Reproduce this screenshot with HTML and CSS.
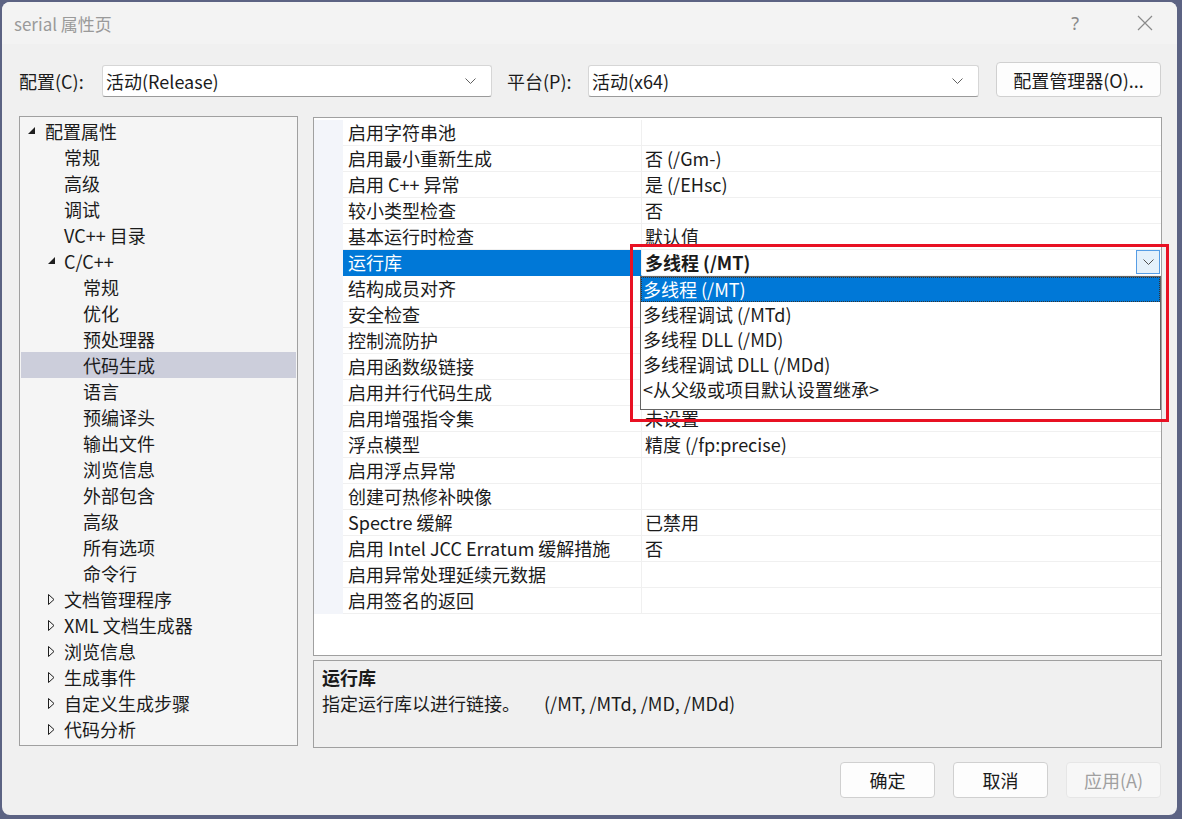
FILE: index.html
```html
<!DOCTYPE html>
<html lang="zh-CN">
<head>
<meta charset="utf-8">
<title>serial 属性页</title>
<link rel="stylesheet" href="styles.css">
</head>
<body>
<div class="window">
  <div class="titlebar">
    <span class="title">serial 属性页</span>
    <div class="tb-actions">
      <span class="help">?</span>
      <svg class="close" width="16" height="16" viewBox="0 0 16 16"><path d="M1 1 L15 15 M15 1 L1 15" stroke="#8a8a8a" stroke-width="1.2" fill="none"/></svg>
    </div>
  </div>
  <div class="content">
    <div class="config-row">
      <span class="lbl lbl-config">配置(C):</span>
      <div class="combo combo-config"><span>活动(Release)</span><svg class="chev" width="11" height="6" viewBox="0 0 11 6"><path d="M0.5 0.5 L5.5 5.5 L10.5 0.5" stroke="#606060" fill="none"/></svg></div>
      <span class="lbl lbl-platform">平台(P):</span>
      <div class="combo combo-platform"><span>活动(x64)</span><svg class="chev" width="11" height="6" viewBox="0 0 11 6"><path d="M0.5 0.5 L5.5 5.5 L10.5 0.5" stroke="#606060" fill="none"/></svg></div>
      <button class="btn btn-manager">配置管理器(O)...</button>
    </div>
    <div class="main">
      <div class="tree">
        <div class="node l0"><span class="arrow"><svg width="8" height="8" viewBox="0 0 8 8"><path d="M7 0 L7 7 L0 7 Z" fill="#1e1e1e"/></svg></span>配置属性</div>
        <div class="node l1"><span class="arrow"></span>常规</div>
        <div class="node l1"><span class="arrow"></span>高级</div>
        <div class="node l1"><span class="arrow"></span>调试</div>
        <div class="node l1"><span class="arrow"></span>VC++ 目录</div>
        <div class="node l1"><span class="arrow"><svg width="8" height="8" viewBox="0 0 8 8"><path d="M7 0 L7 7 L0 7 Z" fill="#1e1e1e"/></svg></span>C/C++</div>
        <div class="node l2"><span class="arrow"></span>常规</div>
        <div class="node l2"><span class="arrow"></span>优化</div>
        <div class="node l2"><span class="arrow"></span>预处理器</div>
        <div class="node l2 selected"><span class="arrow"></span>代码生成</div>
        <div class="node l2"><span class="arrow"></span>语言</div>
        <div class="node l2"><span class="arrow"></span>预编译头</div>
        <div class="node l2"><span class="arrow"></span>输出文件</div>
        <div class="node l2"><span class="arrow"></span>浏览信息</div>
        <div class="node l2"><span class="arrow"></span>外部包含</div>
        <div class="node l2"><span class="arrow"></span>高级</div>
        <div class="node l2"><span class="arrow"></span>所有选项</div>
        <div class="node l2"><span class="arrow"></span>命令行</div>
        <div class="node l1"><span class="arrow"><svg width="7" height="11" viewBox="0 0 7 11"><path d="M0.5 0.5 L6 5.5 L0.5 10.5 Z" fill="none" stroke="#1e1e1e"/></svg></span>文档管理程序</div>
        <div class="node l1"><span class="arrow"><svg width="7" height="11" viewBox="0 0 7 11"><path d="M0.5 0.5 L6 5.5 L0.5 10.5 Z" fill="none" stroke="#1e1e1e"/></svg></span>XML 文档生成器</div>
        <div class="node l1"><span class="arrow"><svg width="7" height="11" viewBox="0 0 7 11"><path d="M0.5 0.5 L6 5.5 L0.5 10.5 Z" fill="none" stroke="#1e1e1e"/></svg></span>浏览信息</div>
        <div class="node l1"><span class="arrow"><svg width="7" height="11" viewBox="0 0 7 11"><path d="M0.5 0.5 L6 5.5 L0.5 10.5 Z" fill="none" stroke="#1e1e1e"/></svg></span>生成事件</div>
        <div class="node l1"><span class="arrow"><svg width="7" height="11" viewBox="0 0 7 11"><path d="M0.5 0.5 L6 5.5 L0.5 10.5 Z" fill="none" stroke="#1e1e1e"/></svg></span>自定义生成步骤</div>
        <div class="node l1"><span class="arrow"><svg width="7" height="11" viewBox="0 0 7 11"><path d="M0.5 0.5 L6 5.5 L0.5 10.5 Z" fill="none" stroke="#1e1e1e"/></svg></span>代码分析</div>
      </div>
      <div class="right">
        <div class="grid">
          <div class="row"><span class="gut"></span><span class="name">启用字符串池</span><span class="val"></span></div>
          <div class="row"><span class="gut"></span><span class="name">启用最小重新生成</span><span class="val">否 (/Gm-)</span></div>
          <div class="row"><span class="gut"></span><span class="name">启用 C++ 异常</span><span class="val">是 (/EHsc)</span></div>
          <div class="row"><span class="gut"></span><span class="name">较小类型检查</span><span class="val">否</span></div>
          <div class="row"><span class="gut"></span><span class="name">基本运行时检查</span><span class="val">默认值</span></div>
          <div class="row sel"><span class="gut"></span><span class="name">运行库</span><span class="val edit"><b>多线程 (/MT)</b><span class="ddbtn"><svg width="11" height="6" viewBox="0 0 11 6"><path d="M0.5 0.5 L5.5 5.5 L10.5 0.5" stroke="#505050" fill="none"/></svg></span></span></div>
          <div class="row"><span class="gut"></span><span class="name">结构成员对齐</span><span class="val"></span></div>
          <div class="row"><span class="gut"></span><span class="name">安全检查</span><span class="val"></span></div>
          <div class="row"><span class="gut"></span><span class="name">控制流防护</span><span class="val"></span></div>
          <div class="row"><span class="gut"></span><span class="name">启用函数级链接</span><span class="val"></span></div>
          <div class="row"><span class="gut"></span><span class="name">启用并行代码生成</span><span class="val"></span></div>
          <div class="row"><span class="gut"></span><span class="name">启用增强指令集</span><span class="val">未设置</span></div>
          <div class="row"><span class="gut"></span><span class="name">浮点模型</span><span class="val">精度 (/fp:precise)</span></div>
          <div class="row"><span class="gut"></span><span class="name">启用浮点异常</span><span class="val"></span></div>
          <div class="row"><span class="gut"></span><span class="name">创建可热修补映像</span><span class="val"></span></div>
          <div class="row"><span class="gut"></span><span class="name">Spectre 缓解</span><span class="val">已禁用</span></div>
          <div class="row"><span class="gut"></span><span class="name">启用 Intel JCC Erratum 缓解措施</span><span class="val">否</span></div>
          <div class="row"><span class="gut"></span><span class="name">启用异常处理延续元数据</span><span class="val"></span></div>
          <div class="row"><span class="gut"></span><span class="name">启用签名的返回</span><span class="val"></span></div>

          <div class="droplist">
            <div class="opt active">多线程 (/MT)</div>
            <div class="opt">多线程调试 (/MTd)</div>
            <div class="opt">多线程 DLL (/MD)</div>
            <div class="opt">多线程调试 DLL (/MDd)</div>
            <div class="opt">&lt;从父级或项目默认设置继承&gt;</div>
          </div>
          <div class="redbox"></div>
        </div>
        <div class="desc">
          <div class="desc-title">运行库</div>
          <div class="desc-text">指定运行库以进行链接。<span class="flags">(/MT, /MTd, /MD, /MDd)</span></div>
        </div>
      </div>
    </div>
    <div class="footer">
      <button class="btn btn-foot">确定</button>
      <button class="btn btn-foot">取消</button>
      <button class="btn btn-foot disabled">应用(A)</button>
    </div>
  </div>
</div>
</body>
</html>
```
FILE: styles.css
```css
* { box-sizing: border-box; }
html, body { margin: 0; padding: 0; }
body {
  width: 1182px;
  height: 819px;
  overflow: hidden;
  background: #5c6383;
  font-family: "Noto Sans CJK SC", "Microsoft YaHei", sans-serif;
  font-size: 18px;
  color: #1b1b1b;
}
.window {
  margin: 2px 0 0 2px;
  width: 1175px;
  height: 813px;
  border-radius: 8px;
  background: #f0f0f0;
  overflow: hidden;
  display: flex;
  flex-direction: column;
}
.titlebar {
  height: 42px;
  flex: none;
  background: #f3f3f3;
  display: flex;
  align-items: center;
  justify-content: space-between;
  padding: 0 24px 0 12px;
}
.title {
  font-size: 17px;
  color: #9a9a9a;
}
.tb-actions {
  display: flex;
  align-items: center;
  gap: 58px;
}
.help {
  font-family: "Noto Sans", sans-serif;
  font-size: 18px;
  color: #8a8a8a;
}
.close { display: block; }

.content {
  flex: 1;
  padding: 0 15px 0 17px;
  display: flex;
  flex-direction: column;
}
.config-row {
  margin-top: 18px;
  height: 35px;
  display: flex;
  align-items: flex-end;
}
.lbl {
  line-height: 32px;
  height: 32px;
}
.lbl-config { width: 83px; }
.lbl-platform { width: 81px; margin-left: 15px; }
.combo {
  height: 32px;
  background: #fff;
  border: 1px solid #d6d6d6;
  border-bottom-color: #9a9a9a;
  border-radius: 3px;
  display: flex;
  align-items: center;
  justify-content: space-between;
  padding: 0 15px 0 3px;
}
.combo-config { width: 390px; }
.combo-platform { width: 391px; }
.chev { display: block; }
.btn {
  font-family: inherit;
  font-size: 18px;
  color: #1b1b1b;
  background: #fdfdfd;
  border: 1px solid #d0d0d0;
  border-radius: 4px;
  padding: 0;
}
.btn-manager {
  margin-left: 17px;
  width: 165px;
  height: 35px;
}

.main {
  margin-top: 19px;
  height: 632px;
  display: flex;
  gap: 15px;
}
.tree {
  width: 279px;
  height: 630px;
  border: 1px solid #a0a0a0;
  background: #f5f5f5;
  padding: 1px;
}
.node {
  height: 26px;
  line-height: 26px;
  display: flex;
  align-items: center;
  white-space: nowrap;
}
.node .arrow {
  width: 19px;
  height: 26px;
  flex: none;
  display: flex;
  align-items: center;
  padding-left: 2px;
}
.node .arrow svg { display: block; }
.l0 { padding-left: 5px; }
.l1 { padding-left: 24px; }
.l2 { padding-left: 43px; }
.l1 .arrow { padding-left: 3px; }
.node.selected { background: #cccedb; }

.right {
  width: 849px;
  display: flex;
  flex-direction: column;
}
.grid {
  position: relative;
  margin-top: 1px;
  height: 539px;
  border: 1px solid #a0a0a0;
  background: #fff;
  padding-top: 2px;
}
.row {
  display: grid;
  grid-template-columns: 29px 299px 1fr;
  height: 26px;
}
.row .gut { background: #f3f5fa; }
.row .name, .row .val {
  line-height: 25px;
  height: 26px;
  border-bottom: 1px solid #f0f0f0;
  white-space: nowrap;
  overflow: hidden;
}
.row .name {
  padding-left: 5px;
  border-right: 1px solid #f0f0f0;
}
.row .val { padding-left: 3px; }
.row.sel .name {
  background: #0078d7;
  color: #fff;
  border-bottom-color: #0078d7;
}
.row .val.edit {
  display: flex;
  align-items: center;
  justify-content: space-between;
  padding-right: 1px;
}
.val.edit b { font-weight: 700; }
.ddbtn {
  width: 24px;
  height: 24px;
  margin-top: -1px;
  background: #e5f1fb;
  border: 1px solid #569de5;
  display: flex;
  align-items: center;
  justify-content: center;
}
.droplist {
  position: absolute;
  left: 326px;
  top: 158px;
  width: 521px;
  height: 134px;
  background: #fff;
  border: 1px solid #646464;
  padding-bottom: 6px;
}
.opt {
  height: 25px;
  line-height: 25px;
  padding-left: 2px;
  white-space: nowrap;
}
.opt.active {
  background: #0078d7;
  color: #fff;
  outline: 1px dotted #333;
  outline-offset: -1px;
}
.redbox {
  position: absolute;
  left: 316px;
  top: 126px;
  width: 539px;
  height: 178px;
  border: 3px solid #e81123;
  pointer-events: none;
}
.desc {
  margin-top: 4px;
  height: 88px;
  border: 1px solid #a0a0a0;
  background: #f0f0f0;
  padding: 3px 8px 0;
}
.desc-title {
  font-weight: 700;
  line-height: 26px;
}
.desc-text {
  line-height: 26px;
  white-space: nowrap;
}
.flags { margin-left: 24px; }

.footer {
  margin-top: 14px;
  height: 36px;
  display: flex;
  justify-content: flex-end;
  gap: 18px;
  padding-right: 1px;
}
.btn-foot {
  width: 95px;
  height: 36px;
}
.btn-foot.disabled {
  color: #a0a0a0;
  background: #f7f7f7;
  border-color: #e6e6e6;
}
```
